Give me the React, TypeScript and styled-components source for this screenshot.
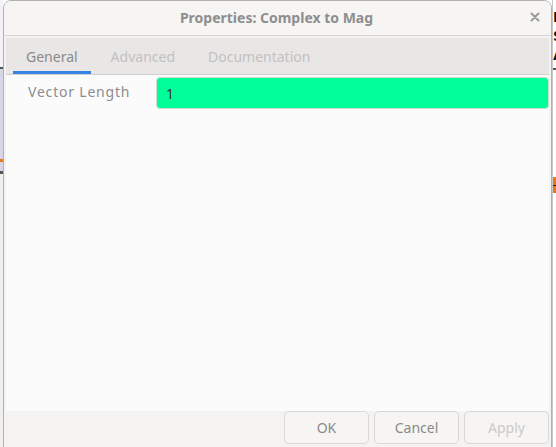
import React from "react";
import styled, { createGlobalStyle } from "styled-components";

const Global = createGlobalStyle`
  html, body { margin: 0; padding: 0; }
  body {
    width: 556px;
    height: 447px;
    overflow: hidden;
    background: #ffffff;
    font-family: "Noto Sans", "Open Sans", sans-serif;
  }
`;

const Screen = styled.div`
  display: grid;
  grid-template-columns: 3px 549px 4px;
  width: 556px;
  height: 447px;
`;

const LeftStrip = styled.div`
  display: flex;
  flex-direction: column;
  background: #f2f2f2;
`;

const StripBlock = styled.div<{ $h: number; $bg: string }>`
  height: ${(p) => p.$h}px;
  background: ${(p) => p.$bg};
  flex-shrink: 0;
`;

const RightStrip = styled.div`
  display: flex;
  flex-direction: column;
  background: #ffffff;
  overflow: hidden;
  border-left: 1px solid #c8c8c8;
`;

const StripText = styled.div`
  font-family: "DejaVu Sans", sans-serif;
  font-size: 14px;
  font-weight: bold;
  line-height: 19px;
  color: #111;
  margin-left: 0;
  white-space: nowrap;
`;

const Dialog = styled.div`
  display: flex;
  flex-direction: column;
  height: 446px;
  border: 1px solid #b4b2b0;
  border-radius: 8px 8px 0 0;
  background: #f4f3f2;
  overflow: hidden;
`;

const TitleBar = styled.div`
  position: relative;
  height: 34px;
  display: flex;
  align-items: center;
  justify-content: center;
  background: #f6f5f4;
  border-bottom: 1px solid #d8d6d4;
  flex-shrink: 0;
`;

const Title = styled.div`
  font-size: 14px;
  font-weight: bold;
  color: #8e8e8e;
  padding-right: 2px;
  margin-top: -1px;
`;

const CloseButton = styled.div`
  position: absolute;
  right: 8px;
  top: 8px;
  width: 16px;
  height: 16px;
  display: flex;
  align-items: center;
  justify-content: center;
`;

const Notebook = styled.div`
  flex: 1;
  display: flex;
  flex-direction: column;
  margin: 2px 2px 0 2px;
  min-height: 0;
`;

const TabBar = styled.div`
  height: 36px;
  display: flex;
  align-items: stretch;
  background: #e8e7e6;
  border-bottom: 1px solid #d3d1cf;
  padding-left: 7px;
  gap: 7px;
  flex-shrink: 0;
`;

const Tab = styled.div<{ $active?: boolean }>`
  display: flex;
  align-items: center;
  padding: 1px 13px 0;
  font-size: 14px;
  color: ${(p) => (p.$active ? "#8a8a8a" : "#c2c1c0")};
  box-shadow: ${(p) => (p.$active ? "inset 0 -3px 0 #3584e4" : "none")};
`;

const Page = styled.div`
  flex: 1;
  background: #fbfbfb;
  padding: 2px 0 0 0;
`;

const FieldRow = styled.div`
  display: grid;
  grid-template-columns: 150px 1fr;
  align-items: center;
`;

const Label = styled.div`
  font-size: 14px;
  letter-spacing: 0.8px;
  color: #8d8d8d;
  padding-left: 22px;
  padding-bottom: 3px;
`;

const Input = styled.div`
  height: 30px;
  display: flex;
  align-items: center;
  padding-left: 9px;
  background: #00ff99;
  border: 1px solid #cfd8d3;
  border-radius: 4px;
  font-size: 14px;
  color: #2e3436;
`;

const Footer = styled.div`
  height: 36px;
  display: flex;
  justify-content: flex-end;
  align-items: flex-start;
  gap: 5px;
  padding-right: 2px;
  background: #f4f3f2;
  flex-shrink: 0;
`;

const Button = styled.div<{ $disabled?: boolean }>`
  width: 83px;
  height: 31px;
  display: flex;
  align-items: center;
  justify-content: center;
  border: 1px solid #dad8d6;
  border-radius: 5px;
  background: #f6f5f4;
  font-size: 14px;
  color: ${(p) => (p.$disabled ? "#cbcac9" : "#8a8a8a")};
`;

export default function App() {
  return (
    <>
      <Global />
      <Screen>
        <LeftStrip>
          <StripBlock $h={67} $bg="#f3f2f7" />
          <StripBlock $h={2} $bg="#555555" />
          <StripBlock $h={90} $bg="#d9d5e8" />
          <StripBlock $h={3} $bg="#e07b20" />
          <StripBlock $h={9} $bg="#d9d5e8" />
          <StripBlock $h={3} $bg="#555555" />
          <StripBlock $h={273} $bg="#efefef" />
        </LeftStrip>
        <Dialog>
          <TitleBar>
            <Title>Properties: Complex to Mag</Title>
            <CloseButton>
              <svg width="10" height="10" viewBox="0 0 10 10">
                <path d="M1.5 1.5L8.5 8.5M8.5 1.5L1.5 8.5" stroke="#9a9a9a" strokeWidth="2" strokeLinecap="round" />
              </svg>
            </CloseButton>
          </TitleBar>
          <Notebook>
            <TabBar>
              <Tab $active>General</Tab>
              <Tab>Advanced</Tab>
              <Tab>Documentation</Tab>
            </TabBar>
            <Page>
              <FieldRow>
                <Label>Vector Length</Label>
                <Input>1</Input>
              </FieldRow>
            </Page>
          </Notebook>
          <Footer>
            <Button>OK</Button>
            <Button>Cancel</Button>
            <Button $disabled>Apply</Button>
          </Footer>
        </Dialog>
        <RightStrip>
          <StripBlock $h={8} $bg="#ffffff" />
          <StripText>N</StripText>
          <StripText>S</StripText>
          <StripText>A</StripText>
          <StripBlock $h={3} $bg="#ffffff" />
          <StripBlock $h={2} $bg="#555555" />
          <StripBlock $h={107} $bg="#ffffff" />
          <StripBlock $h={8} $bg="#e07b20" />
          <StripBlock $h={1} $bg="#222222" />
          <StripBlock $h={7} $bg="#e07b20" />
        </RightStrip>
      </Screen>
    </>
  );
}
